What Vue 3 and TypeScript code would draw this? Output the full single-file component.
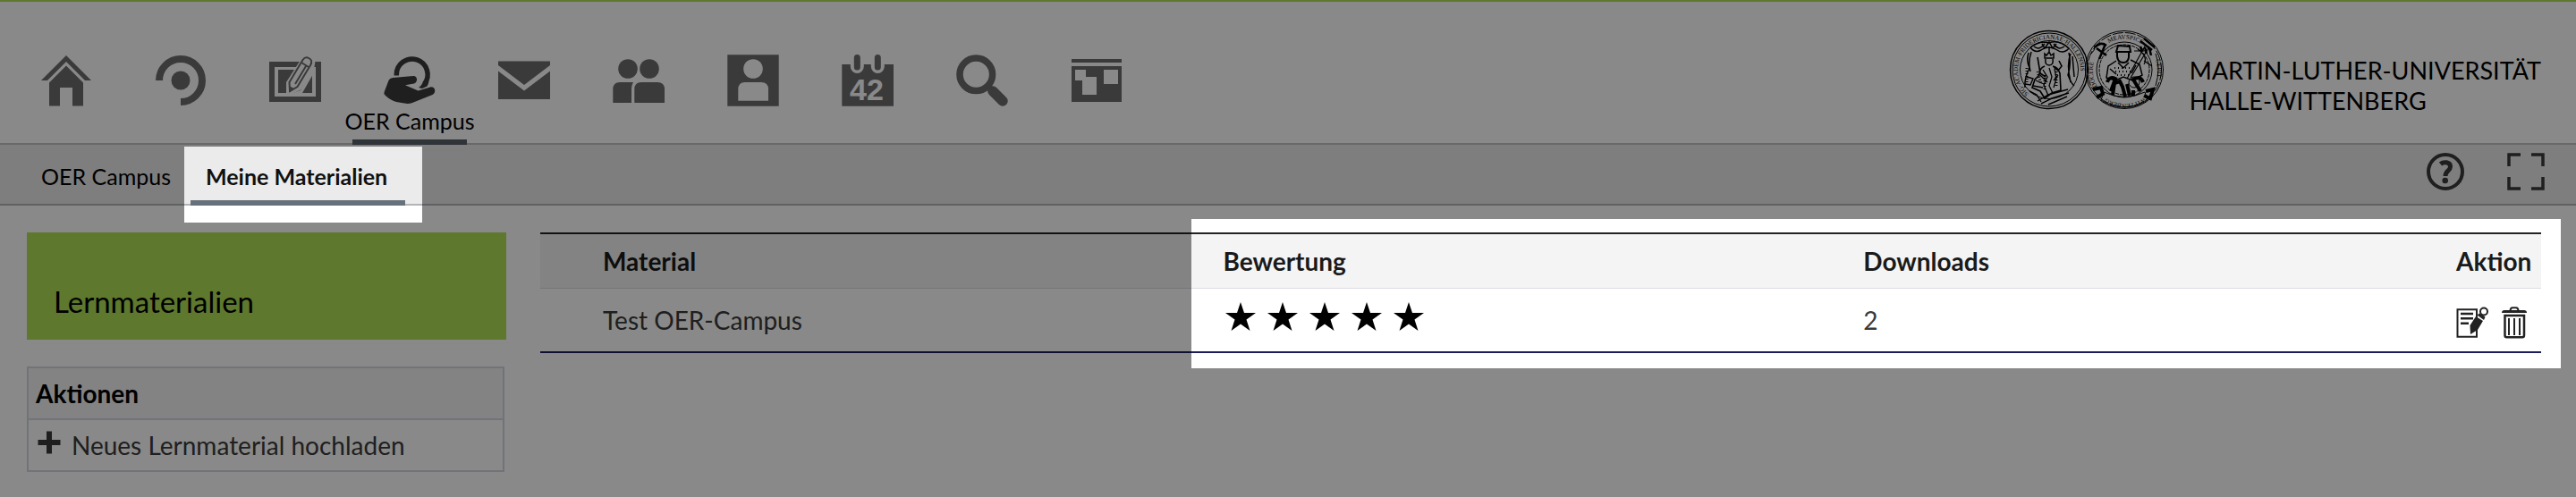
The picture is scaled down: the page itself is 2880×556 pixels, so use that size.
<script setup lang="ts">
interface NavItem { id: string; label: string; active?: boolean }
interface Material { title: string; rating: number; downloads: number }

const navItems: NavItem[] = [
  { id: 'home', label: 'Start' },
  { id: 'studip', label: 'Veranstaltungen' },
  { id: 'workplace', label: 'Arbeitsplatz' },
  { id: 'oer', label: 'OER Campus', active: true },
  { id: 'mail', label: 'Nachrichten' },
  { id: 'community', label: 'Community' },
  { id: 'profile', label: 'Profil' },
  { id: 'calendar', label: 'Planer' },
  { id: 'search', label: 'Suche' },
  { id: 'board', label: 'Schwarzes Brett' },
]

const materials: Material[] = [{ title: 'Test OER-Campus', rating: 5, downloads: 2 }]
</script>

<template>
  <div class="page">
    <header class="header">
      <nav class="nav" aria-label="Hauptnavigation">
        <a
          v-for="item in navItems"
          :key="item.id"
          href="#"
          class="nav-item"
          :class="{ active: item.active }"
          :aria-label="item.label"
        >
          <svg class="nav-icon" viewBox="0 0 64 64" aria-hidden="true">
            <g v-if="item.id === 'home'">
              <path d="M32 4 60 32H53L32 11 11 32H4Z" />
              <path d="M32 15.500 51 34.500V60.500H39V40H25V60.500H13V34.500Z" />
            </g>
            <g v-else-if="item.id === 'studip'">
              <path class="line" stroke-width="8" d="M8 32A24 24 0 1 1 32 56" />
              <circle cx="32" cy="32" r="10.500" />
            </g>
            <g v-else-if="item.id === 'workplace'">
              <path fill-rule="evenodd" d="M3 11H61V56H3ZM9 17V50H55V17Z" />
              <path d="M13 20H51V46H13Z" />
              <path class="cut" d="M38 9 44 4 55 8 53 19 39 42 25 49 22 46V34Z" />
              <path d="M30 46H38L51 24V46Z" />
              <path class="cut" d="M30 46 38 43 51 20 52 25 40 46Z" />
              <path
                class="pencil"
                d="M25.500 34 40.500 9C43 5 46 6 48 7.500C50.500 9 51 11.500 49 15L34.500 39 26 44Z"
              />
              <path class="line" stroke-width="2" d="M39 12 47 17M44 16 32 36" />
              <path d="M25 38 31 41 26 45Z" />
            </g>
            <g v-else-if="item.id === 'oer'">
              <path class="line" stroke-width="5.500" d="M17.300 26.500V25.500A17.400 17.400 0 1 1 48.500 36" />
              <path d="M53.500 33Q53 36 51.500 38.500L46 41 42 40Q45 38 47 34Z" />
              <path
                d="M13 29 36 27C41 26.500 41.500 34 37 35.500L27 37.300 41.500 43.500 55 39.400C61 38.500 62 46 57.500 48L35 57Q31 58.500 26 57.600L17 56Q10 54 4 48Q3 47 3.600 45L8.500 32Q9.500 29.500 13 29Z"
              />
            </g>
            <g v-else-if="item.id === 'mail'">
              <path d="M3 10.500H61V15L32 37 3 15ZM3 21.500 32 43.500 61 21.500V53H3Z" />
            </g>
            <g v-else-if="item.id === 'community'">
              <circle cx="20" cy="19" r="10.800" />
              <circle cx="44" cy="19" r="10.800" />
              <path d="M3.300 57V42Q3.300 34 11 34H26Q24 37 24 41V57Z" />
              <path d="M27.300 57V42Q27.300 34 35 34H53Q61 34 61 42V57Z" />
            </g>
            <g v-else-if="item.id === 'profile'">
              <path d="M3.300 3.300H60.700V60.700H3.300Z" />
              <circle class="cut" cx="32" cy="19" r="10.800" />
              <path class="cut" d="M15.300 54.700V42Q15.300 34 23 34H41Q49 34 49 42V54.700Z" />
            </g>
            <g v-else-if="item.id === 'calendar'">
              <path d="M3.300 14H61V60.700H3.300Z" />
              <path class="slot" stroke-width="15" d="M20.300 10V16.500M43.300 10V16.500" />
              <path class="line round" stroke-width="7" d="M20.300 6.500V17M43.300 6.500V17" />
              <text class="day" x="31" y="54" text-anchor="middle">42</text>
            </g>
            <g v-else-if="item.id === 'search'">
              <circle class="line" stroke-width="7.500" cx="25.300" cy="25.300" r="18.300" />
              <path class="line" stroke-width="7" d="M38 38 44 44" />
              <path class="line round" stroke-width="11.500" d="M44 44 55 55" />
            </g>
            <g v-else>
              <path d="M4 8H60V12H4ZM4 16H60V56H4Z" />
              <path class="cut" d="M8 20H20V28H32V48H16V32H8ZM40 20H56V36H40Z" />
            </g>
          </svg>
          <span v-if="item.active" class="nav-label">{{ item.label }}</span>
        </a>
      </nav>

      <a href="#" class="brand">
        <svg class="seals" viewBox="0 0 176 92" aria-hidden="true">
          <defs>
            <path id="ring-left" d="M22 73A35 35 0 1 1 68 73" />
            <path id="ring-top" d="M100 27A35 35 0 0 1 158 27" />
            <path id="ring-west" d="M101 68A35 35 0 0 1 97 32" />
            <path id="ring-east" d="M160 28A36 36 0 0 1 162 64" />
            <path id="ring-bottom" d="M156 73A37 37 0 0 1 103 73" />
          </defs>
          <g class="seal">
            <circle cx="45" cy="46" r="43.500" stroke-width="1.500" />
            <circle cx="45" cy="46" r="41" />
            <circle cx="45" cy="46" r="32.500" />
            <path d="M24 21Q34 13 45 16Q56 12 67 22Q61 29 54 24Q45 18 36 24Q29 28 24 21M28 20Q34 25 40 17M62 20Q55 25 50 17M37 17 40 22 45 15 49 22 53 17" stroke-width="1.500" />
            <path d="M22 27Q19 36 23 44Q17 56 18 66M25 26Q21 38 24 48M67 27Q70 39 66 52Q70 62 73 64M71 31 73 54M69 28Q64 40 69 60" stroke-width="1.500" />
            <path d="M40 33V28L42 30 45 26 47 30 50 28V33ZM41 34Q40 41 45 41Q50 41 49 34M45 26V20" stroke-width="1.500" />
            <path d="M40 42Q34 44 34 52L29 57 26 66 35 70 40 78 48 72 58 69 57 50Q55 43 49 42M32 32 35 50 41 54M56 36 59 42 55 47 50 43" stroke-width="1.600" />
            <path d="M38 46 43 54 39 63 44 75M45 44 48 54 45 64 49 72M51 45 53 56 50 66M30 58 39 62M27 64 38 66M55 52 50 58M35 52 43 60" stroke-width="1.300" />
            <path d="M32 81 44 74 66 68M36 84 48 78 67 72M44 85 65 76M23 70 31 74 36 82M20 54 27 56 24 63 18 62" stroke-width="1.400" />
            <path stroke-dasharray="1 2" stroke-width="3" d="M32 48 36 62M40 52V70M53 48V65M20 44V65" />
          </g>
          <g class="seal">
            <circle cx="129" cy="46" r="43.500" />
            <circle cx="129" cy="46" r="41.500" stroke-dasharray="12 2" />
            <circle cx="129" cy="46" r="31" />
            <circle cx="129" cy="46" r="28" stroke-dasharray="4 1" />
            <path d="M120 26 122 19 135 20 136 26ZM121 27Q120 38 128 38Q135 38 134 27" stroke-width="2" />
            <path d="M120 36 111 42 109 55 119 58 128 54 138 58 149 52 146 40 136 35M122 38 128 44 134 38M113 45 120 51M142 41 137 50" stroke-width="1.500" />
            <path d="M153 18 132 56M157 20 136 55M140 25 151 25M144 23Q156 31 151 40M151 36 160 42" stroke-width="1.200" />
            <path d="M110 60Q112 53 119 56L114 70M150 60Q147 52 139 57L147 70" stroke-width="4" />
            <path d="M116 74 118 61 124 59 127 65 130 76M132 62 135 75M139 69V75" stroke-width="4" />
            <circle cx="140" cy="60" r="6" />
            <path d="M98 22 109 30M108 17 101 34M96 21Q103 14 109 19M147 14 160 24M151 11 163 21M147 20 149 26M152 21 154 28M157 22 159 30" stroke-width="2.500" />
            <path d="M94 68 103 66 105 73 98 77M153 70 161 68 158 78 151 75" stroke-width="4" />
            <path d="M106 71Q129 82 152 71L155 80Q129 96 103 80ZM92 28Q97 24 96 19M164 28Q170 44 164 64" />
            <path stroke-dasharray="1 3" stroke-width="2" d="M118 44H137M119 48H139M121 52H135" />
          </g>
          <g class="seal-text">
            <text><textPath href="#ring-left">SIG·ACADEM·FRIDERICIANAE·HALLENSIS</textPath></text>
            <text><textPath href="#ring-top" startOffset="16">MEAVSPICE</textPath></text>
            <text><textPath href="#ring-west" startOffset="4">DOCERE</textPath></text>
            <text><textPath href="#ring-east" startOffset="8">CEPIT</textPath></text>
            <text><textPath href="#ring-bottom" startOffset="6">WITTENBERG</textPath></text>
          </g>
        </svg>
        <span class="brand-name">MARTIN-LUTHER-UNIVERSITÄT<br />HALLE-WITTENBERG</span>
      </a>
    </header>

    <div class="tabbar">
      <nav class="tabs" aria-label="Bereich">
        <a href="#" class="tab">OER Campus</a>
        <a href="#" class="tab current" aria-current="page">Meine Materialien</a>
      </nav>
      <div class="tools">
        <button type="button" class="tool" aria-label="Hilfe">
          <svg viewBox="0 0 42 42" aria-hidden="true">
            <circle class="line" stroke-width="4" cx="21" cy="21" r="19" />
            <path class="line" stroke-width="5" d="M15.500 12.500C19 9.500 26.500 10 26.500 15.500C26.500 20 21 20 21 26" />
            <circle cx="20.700" cy="31" r="3.300" />
          </svg>
        </button>
        <button type="button" class="tool" aria-label="Vollbild">
          <svg viewBox="0 0 42 42" aria-hidden="true">
            <path class="line" stroke-width="3.500" d="M2 15V2H15M27 2H40V15M40 27V40H27M15 40H2V27" />
          </svg>
        </button>
      </div>
    </div>

    <div class="layout">
      <aside class="sidebar">
        <h1 class="banner">Lernmaterialien</h1>
        <section class="widget">
          <h2 class="widget-title">Aktionen</h2>
          <a href="#" class="widget-link">
            <svg class="plus" viewBox="0 0 26 26" aria-hidden="true">
              <path d="M10 0.500H16V10H25.500V16H16V25.500H10V16H0.500V10H10Z" />
            </svg>
            Neues Lernmaterial hochladen
          </a>
        </section>
      </aside>

      <main class="content">
        <table class="materials">
          <colgroup>
            <col class="col-mark" />
            <col class="col-title" />
            <col class="col-rating" />
            <col />
            <col class="col-action" />
          </colgroup>
          <thead>
            <tr>
              <td></td>
              <th scope="col">Material</th>
              <th scope="col">Bewertung</th>
              <th scope="col">Downloads</th>
              <th scope="col">Aktion</th>
            </tr>
          </thead>
          <tbody>
            <tr v-for="m in materials" :key="m.title">
              <td></td>
              <td>{{ m.title }}</td>
              <td>
                <div class="stars" role="img" :aria-label="`${m.rating} Sterne`">
                  <svg v-for="n in m.rating" :key="n" viewBox="0 0 34 32">
                    <path d="M17 0 21 12H34L23.500 19.500 27.500 32 17 24.500 6.500 32 10.500 19.500 0 12H13Z" />
                  </svg>
                </div>
              </td>
              <td>{{ m.downloads }}</td>
              <td>
                <div class="actions">
                  <button type="button" class="action" aria-label="Bearbeiten">
                    <svg viewBox="0 0 36 36" aria-hidden="true">
                      <path class="line" stroke-width="2" d="M23 12V3.300H1.500V33.700H23V26" />
                      <path class="line" stroke-width="2.500" d="M5 8H19M5 13.300H19M5 18.700H14" />
                      <path d="M22 11 30 16 24 26 16 31 15.500 21Z" />
                      <path d="M23.500 9.500 26 7.500 32.500 11.500 31 15Z" />
                      <circle class="cap" cx="31" cy="5.500" r="4" />
                    </svg>
                  </button>
                  <button type="button" class="action" aria-label="Löschen">
                    <svg viewBox="0 0 36 36" aria-hidden="true">
                      <path d="M4 7Q4 4 7 4H29Q32 4 32 7Z" />
                      <path class="line" stroke-width="2" d="M13.500 5Q13.500 1.300 16 1.300H20Q22.500 1.300 22.500 5" />
                      <path class="line" stroke-width="2.500" d="M7.500 10H29V32Q29 34.300 27 34.300H9.500Q7.500 34.300 7.500 32Z" />
                      <path class="line" stroke-width="2" d="M12 13V32M18 13V32M24 13V32" />
                    </svg>
                  </button>
                </div>
              </td>
            </tr>
          </tbody>
        </table>
      </main>
    </div>

    <div class="dim" aria-hidden="true"></div>
  </div>
</template>

<style>
body {
  margin: 0;
}
</style>

<style scoped>
.page {
  position: relative;
  box-sizing: border-box;
  min-height: 100vh;
  border-top: 2px solid #afdf56;
  background: #fff;
  color: #3a3a3a;
  font: 28px/34px Lato, 'Open Sans', sans-serif;
}
a {
  color: inherit;
  text-decoration: none;
}
svg {
  display: block;
  fill: currentColor;
}
button {
  padding: 0;
  border: 0;
  background: none;
  color: inherit;
  cursor: pointer;
}
.line {
  fill: none;
  stroke: currentColor;
}
.round {
  stroke-linecap: round;
}
.cut {
  fill: #fff;
}
.slot {
  stroke: #fff;
  stroke-linecap: round;
}
.pencil,
.cap {
  fill: #fff;
  stroke: currentColor;
  stroke-width: 2;
}
.day {
  fill: #fff;
  font: bold 34px 'Liberation Sans', sans-serif;
}

.header {
  display: flex;
  justify-content: space-between;
  padding: 0 39px 0 10px;
  border-bottom: 2px solid #c4c4c4;
}
.nav {
  display: flex;
  margin-bottom: -2px;
}
.nav-item {
  box-sizing: border-box;
  display: flex;
  flex-direction: column;
  align-items: center;
  width: 128px;
  height: 160px;
  padding-top: 56px;
  color: #6c6c6c;
}
.nav-item.active {
  border-bottom: 6px solid #58616a;
  color: #3a3a3a;
}
.nav-icon {
  flex: none;
  width: 64px;
  height: 64px;
}
.nav-label {
  color: #000;
  font-size: 25px;
  line-height: 26px;
  white-space: nowrap;
}
.brand {
  display: flex;
  align-items: flex-start;
  gap: 26px;
  padding-top: 30px;
  color: #000;
}
.seals {
  width: 176px;
  height: 92px;
}
.seal {
  fill: none;
  stroke: #000;
}
.seal-text {
  font: 7px 'Liberation Serif', serif;
}
.brand-name {
  padding-top: 30px;
  font-size: 27px;
  line-height: 34px;
  white-space: nowrap;
}

.tabbar {
  display: flex;
  justify-content: space-between;
  padding: 0 35px 0 29px;
  border-bottom: 2px solid #b2b4b7;
  background: #ebebeb;
}
.tabs {
  display: flex;
  gap: 2px;
  margin-bottom: -2px;
  color: #000;
  font-size: 25px;
}
.tab {
  padding: 18px 20px 10px 17px;
  border-bottom: 6px solid transparent;
}
.tab.current {
  border-color: #67717b;
  color: #111;
  font-weight: bold;
}
.tools {
  display: flex;
  align-items: center;
  gap: 48px;
  padding-bottom: 6px;
}
.tool {
  width: 42px;
  height: 42px;
}

.layout {
  display: flex;
  align-items: flex-start;
  gap: 38px;
  padding: 30px 39px 28px 30px;
}
.sidebar {
  flex: none;
  width: 536px;
}
.banner {
  margin: 0 0 30px;
  padding: 57px 30px 23px;
  background: #afdf56;
  color: #000;
  font-size: 33px;
  font-weight: normal;
  line-height: 40px;
}
.widget {
  margin-right: 2px;
  border: 2px solid #d0d7e3;
}
.widget-title {
  margin: 0;
  padding: 11px 8px;
  border-bottom: 2px solid #d0d7e3;
  background: #f4f4f4;
  color: #000;
  font-size: 28px;
  line-height: 34px;
}
.widget-link {
  display: flex;
  align-items: center;
  gap: 12px;
  padding: 11px 10px;
}
.plus {
  width: 26px;
  height: 26px;
  margin-bottom: 6px;
}

.content {
  flex: 1;
  min-width: 0;
}
.materials {
  width: 100%;
  border-collapse: separate;
  border-spacing: 0;
  border-bottom: 2px solid #1c1c5c;
  table-layout: fixed;
}
.col-mark {
  width: 61px;
}
.col-title {
  width: 31%;
}
.col-rating {
  width: 32%;
}
.col-action {
  width: 104px;
}
.materials th,
.materials td {
  height: 70px;
  padding: 0 9px;
  text-align: left;
}
.materials thead th,
.materials thead td {
  height: 60px;
  border-top: 2px solid #222;
  border-bottom: 1px solid #dcdce6;
  background: #f4f4f4;
  color: #1a1a1a;
}
.stars {
  display: flex;
  gap: 13px;
  padding: 0 3px 8px;
  color: #000;
}
.stars svg {
  width: 34px;
  height: 32px;
}
.actions {
  display: flex;
  gap: 11px;
  padding-top: 6px;
  color: #222;
}
.action {
  flex: none;
  width: 36px;
  height: 36px;
}

/* Dimmed layer with two cut-out spotlights: the current tab and the right part of the table. */
.dim {
  position: absolute;
  inset: -2px 0 0;
  background: rgba(0, 0, 0, 0.463);
  mask-image: linear-gradient(#000, #000), linear-gradient(#000, #000), linear-gradient(#000, #000);
  mask-repeat: no-repeat;
  mask-position: 206px 164px, right 17px top 245px, 0 0;
  mask-size: 266px 85px, calc(100% - 1349px) 167px, 100% 100%;
  mask-composite: exclude;
  pointer-events: none;
}
</style>
